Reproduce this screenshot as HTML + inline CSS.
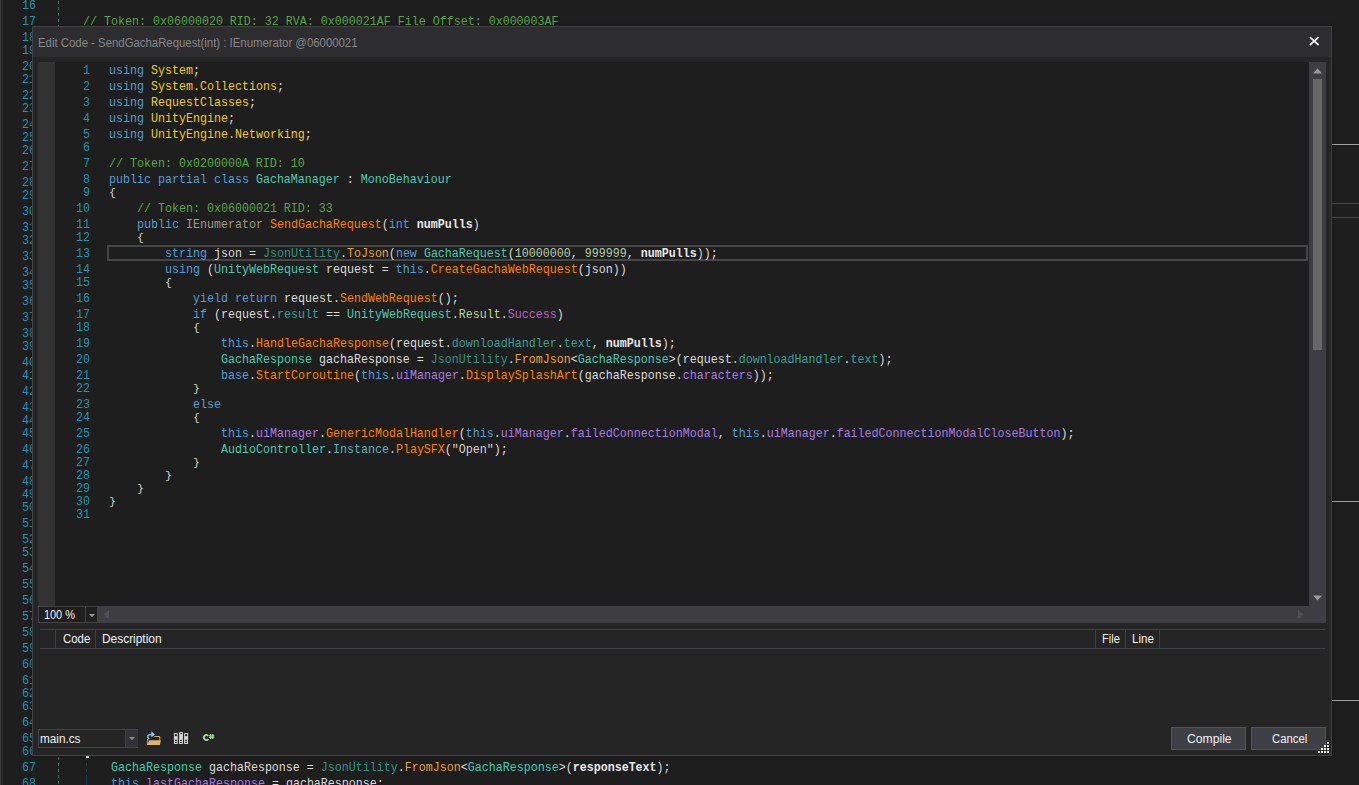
<!DOCTYPE html>
<html><head><meta charset="utf-8"><title>Edit Code</title>
<style>
html,body{margin:0;padding:0}
html{width:1359px;height:785px;overflow:hidden;background:#1e1e1e}
body{width:1359px;height:785px;overflow:hidden;position:relative;background:#1e1e1e;font-family:"Liberation Sans",sans-serif;font-size:12px;color:#f1f1f1}
.abs,.ln,.cl,.bn,.bl{position:absolute}
.ln,.cl,.bn,.bl{font-family:"Liberation Mono",monospace;font-size:12.2px;letter-spacing:0px;line-height:16px;height:16px;white-space:pre;color:#dcdcdc}
.cl,.bl{transform:scaleX(0.95628);transform-origin:0 0}
.ln,.bn{color:#2b91af;text-align:right;transform:scaleX(0.95628);transform-origin:100% 0}
.ln{left:50px;width:40px}
.bn{left:6.2px;width:30px}
.k{color:#569cd6}
.ns{color:#f2c832}
.t{color:#4ec9b0}
.st{color:#3c8f83}
.i{color:#9b9b82}
.m{color:#ff8000}
.sm{color:#e8a04a}
.f{color:#a77be0}
.ef{color:#bd63c5}
.e{color:#b8d7a3}
.p{color:#3f9e98}
.sp{color:#5fb4b4}
.c{color:#57a64a}
.n{color:#b5cea8}
.s{color:#dcd2c8}
.l{color:#dcdcdc}
.b{color:#e8e8e8}
.b{font-weight:bold}
#root{position:absolute;left:0;top:0;width:1359px;height:785px;overflow:hidden;contain:strict}
#dlg{position:absolute;left:32px;top:26px;width:1300px;height:730px;box-sizing:border-box;background:#252526;border:1px solid #434346;box-shadow:0 0 3px rgba(0,0,0,.4)}
#dlg .in{position:absolute;left:-33px;top:-27px;width:1359px;height:785px}
.ui{position:absolute;white-space:pre;line-height:16px;height:16px}
</style></head><body><div id="root">

<div class="abs" style="left:0;top:0;width:1px;height:785px;background:#38383a"></div>
<div class="abs" style="left:1px;top:0;width:2px;height:785px;background:#262627"></div>
<div class="abs" style="left:58px;top:0;width:1px;height:785px;background:repeating-linear-gradient(180deg,#2e7a5e 0,#2e7a5e 3.5px,transparent 3.5px,transparent 6px);background-position:0 1px"></div>
<div class="abs" style="left:86px;top:756px;width:1px;height:19px;background:repeating-linear-gradient(180deg,#1f403a 0,#1f403a 3.5px,transparent 3.5px,transparent 6px);background-position:0 1px"></div>
<div class="abs" style="left:86px;top:775px;width:1px;height:10px;background:#1f3f66"></div>
<div class="abs" style="left:86px;top:756px;width:3px;height:1.5px;background:#e8e8e8"></div>
<div class="bn" style="top:-2.3px">16</div>
<div class="bn" style="top:13.7px">17</div>
<div class="bn" style="top:29.7px">18</div>
<div class="bn" style="top:42.7px">19</div>
<div class="bn" style="top:58.7px">20</div>
<div class="bn" style="top:71.7px">21</div>
<div class="bn" style="top:87.7px">22</div>
<div class="bn" style="top:100.7px">23</div>
<div class="bn" style="top:116.7px">24</div>
<div class="bn" style="top:129.7px">25</div>
<div class="bn" style="top:142.7px">26</div>
<div class="bn" style="top:158.7px">27</div>
<div class="bn" style="top:174.7px">28</div>
<div class="bn" style="top:187.7px">29</div>
<div class="bn" style="top:203.7px">30</div>
<div class="bn" style="top:219.7px">31</div>
<div class="bn" style="top:232.7px">32</div>
<div class="bn" style="top:248.7px">33</div>
<div class="bn" style="top:264.7px">34</div>
<div class="bn" style="top:277.7px">35</div>
<div class="bn" style="top:293.7px">36</div>
<div class="bn" style="top:309.7px">37</div>
<div class="bn" style="top:325.7px">38</div>
<div class="bn" style="top:338.7px">39</div>
<div class="bn" style="top:354.7px">40</div>
<div class="bn" style="top:367.7px">41</div>
<div class="bn" style="top:383.7px">42</div>
<div class="bn" style="top:399.7px">43</div>
<div class="bn" style="top:412.7px">44</div>
<div class="bn" style="top:425.7px">45</div>
<div class="bn" style="top:441.7px">46</div>
<div class="bn" style="top:457.7px">47</div>
<div class="bn" style="top:473.7px">48</div>
<div class="bn" style="top:486.7px">49</div>
<div class="bn" style="top:499.7px">50</div>
<div class="bn" style="top:515.7px">51</div>
<div class="bn" style="top:531.7px">52</div>
<div class="bn" style="top:544.7px">53</div>
<div class="bn" style="top:560.7px">54</div>
<div class="bn" style="top:576.7px">55</div>
<div class="bn" style="top:592.7px">56</div>
<div class="bn" style="top:608.7px">57</div>
<div class="bn" style="top:624.7px">58</div>
<div class="bn" style="top:640.7px">59</div>
<div class="bn" style="top:656.7px">60</div>
<div class="bn" style="top:672.7px">61</div>
<div class="bn" style="top:685.7px">62</div>
<div class="bn" style="top:698.7px">63</div>
<div class="bn" style="top:714.7px">64</div>
<div class="bn" style="top:730.7px">65</div>
<div class="bn" style="top:743.7px">66</div>
<div class="bn" style="top:759.7px">67</div>
<div class="bn" style="top:775.7px">68</div>
<div class="bl" style="left:83px;top:13.7px"><span class="c">// Token: 0x06000020 RID: 32 RVA: 0x000021AF File Offset: 0x000003AF</span></div>
<div class="bl" style="left:111px;top:759.7px"><span class="t">GachaResponse</span> <span class="l">gachaResponse</span> = <span class="st">JsonUtility</span>.<span class="sm">FromJson</span>&lt;<span class="t">GachaResponse</span>&gt;(<span class="b">responseText</span>);</div>
<div class="bl" style="left:111px;top:775.7px"><span class="k">this</span>.<span class="f">lastGachaResponse</span> = <span class="l">gachaResponse</span>;</div>
<div class="abs" style="left:1332px;top:144px;width:27px;height:1px;background:#a0a0a0"></div>
<div class="abs" style="left:1332px;top:203px;width:27px;height:1px;background:#4a4a4c"></div>
<div class="abs" style="left:1332px;top:217px;width:27px;height:1px;background:#4a4a4c"></div>
<div class="abs" style="left:1332px;top:501px;width:27px;height:1px;background:#a0a0a0"></div>
<div class="abs" style="left:1332px;top:700px;width:27px;height:1px;background:#a0a0a0"></div>
<div id="dlg"><div class="in">
<div class="abs" style="left:33px;top:27px;width:1298px;height:30px;background:#2d2d30"></div>
<div class="ui" id="title" style="left:38.4px;top:35px;font-size:12.3px;color:#878787;transform:scaleX(0.9251);transform-origin:0 50%;">Edit Code - SendGachaRequest(int) : IEnumerator @06000021</div>
<svg class="abs" style="left:1308px;top:35px" width="12" height="12" viewBox="0 0 12 12"><path d="M1.9 2.1 L10.6 10 M10.6 2.1 L1.9 10" stroke="#f1f1f1" stroke-width="1.7" fill="none"/></svg>
<div class="abs" style="left:38px;top:62px;width:1271px;height:544px;background:#1e1e1e"></div>
<div class="abs" style="left:38px;top:62px;width:17px;height:544px;background:#333333"></div>
<div class="abs" style="left:107px;top:245px;width:1201px;height:16px;box-sizing:border-box;border:2px solid #464646"></div>
<div class="ln" style="top:62.7px">1</div>
<div class="cl" style="left:109px;top:62.7px"><span class="k">using</span> <span class="ns">System</span>;</div>
<div class="ln" style="top:78.7px">2</div>
<div class="cl" style="left:109px;top:78.7px"><span class="k">using</span> <span class="ns">System.Collections</span>;</div>
<div class="ln" style="top:94.7px">3</div>
<div class="cl" style="left:109px;top:94.7px"><span class="k">using</span> <span class="ns">RequestClasses</span>;</div>
<div class="ln" style="top:110.7px">4</div>
<div class="cl" style="left:109px;top:110.7px"><span class="k">using</span> <span class="ns">UnityEngine</span>;</div>
<div class="ln" style="top:126.7px">5</div>
<div class="cl" style="left:109px;top:126.7px"><span class="k">using</span> <span class="ns">UnityEngine.Networking</span>;</div>
<div class="ln" style="top:139.7px">6</div>
<div class="ln" style="top:155.7px">7</div>
<div class="cl" style="left:109px;top:155.7px"><span class="c">// Token: 0x0200000A RID: 10</span></div>
<div class="ln" style="top:171.7px">8</div>
<div class="cl" style="left:109px;top:171.7px"><span class="k">public partial class</span> <span class="t">GachaManager</span> : <span class="t">MonoBehaviour</span></div>
<div class="ln" style="top:184.7px">9</div>
<div class="cl" style="left:109px;top:184.7px;transform:scale(0.95628,0.82);transform-origin:0 11.3px;color:#d0d0d0">{</div>
<div class="ln" style="top:200.7px">10</div>
<div class="cl" style="left:137px;top:200.7px"><span class="c">// Token: 0x06000021 RID: 33</span></div>
<div class="ln" style="top:216.7px">11</div>
<div class="cl" style="left:137px;top:216.7px"><span class="k">public</span> <span class="i">IEnumerator</span> <span class="m">SendGachaRequest</span>(<span class="k">int</span> <span class="b">numPulls</span>)</div>
<div class="ln" style="top:229.7px">12</div>
<div class="cl" style="left:137px;top:229.7px;transform:scale(0.95628,0.82);transform-origin:0 11.3px;color:#d0d0d0">{</div>
<div class="ln" style="top:245.7px">13</div>
<div class="cl" style="left:165px;top:245.7px"><span class="k">string</span> <span class="l">json</span> = <span class="st">JsonUtility</span>.<span class="sm">ToJson</span>(<span class="k">new</span> <span class="t">GachaRequest</span>(<span class="n">10000000</span>, <span class="n">999999</span>, <span class="b">numPulls</span>));</div>
<div class="ln" style="top:261.7px">14</div>
<div class="cl" style="left:165px;top:261.7px"><span class="k">using</span> (<span class="t">UnityWebRequest</span> <span class="l">request</span> = <span class="k">this</span>.<span class="m">CreateGachaWebRequest</span>(<span class="l">json</span>))</div>
<div class="ln" style="top:274.7px">15</div>
<div class="cl" style="left:165px;top:274.7px;transform:scale(0.95628,0.82);transform-origin:0 11.3px;color:#d0d0d0">{</div>
<div class="ln" style="top:290.7px">16</div>
<div class="cl" style="left:193px;top:290.7px"><span class="k">yield return</span> <span class="l">request</span>.<span class="m">SendWebRequest</span>();</div>
<div class="ln" style="top:306.7px">17</div>
<div class="cl" style="left:193px;top:306.7px"><span class="k">if</span> (<span class="l">request</span>.<span class="p">result</span> == <span class="t">UnityWebRequest</span>.<span class="e">Result</span>.<span class="ef">Success</span>)</div>
<div class="ln" style="top:319.7px">18</div>
<div class="cl" style="left:193px;top:319.7px;transform:scale(0.95628,0.82);transform-origin:0 11.3px;color:#d0d0d0">{</div>
<div class="ln" style="top:335.7px">19</div>
<div class="cl" style="left:221px;top:335.7px"><span class="k">this</span>.<span class="m">HandleGachaResponse</span>(<span class="l">request</span>.<span class="p">downloadHandler</span>.<span class="p">text</span>, <span class="b">numPulls</span>);</div>
<div class="ln" style="top:351.7px">20</div>
<div class="cl" style="left:221px;top:351.7px"><span class="t">GachaResponse</span> <span class="l">gachaResponse</span> = <span class="st">JsonUtility</span>.<span class="sm">FromJson</span>&lt;<span class="t">GachaResponse</span>&gt;(<span class="l">request</span>.<span class="p">downloadHandler</span>.<span class="p">text</span>);</div>
<div class="ln" style="top:367.7px">21</div>
<div class="cl" style="left:221px;top:367.7px"><span class="k">base</span>.<span class="m">StartCoroutine</span>(<span class="k">this</span>.<span class="f">uiManager</span>.<span class="m">DisplaySplashArt</span>(<span class="l">gachaResponse</span>.<span class="f">characters</span>));</div>
<div class="ln" style="top:380.7px">22</div>
<div class="cl" style="left:193px;top:380.7px;transform:scale(0.95628,0.82);transform-origin:0 11.3px;color:#d0d0d0">}</div>
<div class="ln" style="top:396.7px">23</div>
<div class="cl" style="left:193px;top:396.7px"><span class="k">else</span></div>
<div class="ln" style="top:409.7px">24</div>
<div class="cl" style="left:193px;top:409.7px;transform:scale(0.95628,0.82);transform-origin:0 11.3px;color:#d0d0d0">{</div>
<div class="ln" style="top:425.7px">25</div>
<div class="cl" style="left:221px;top:425.7px"><span class="k">this</span>.<span class="f">uiManager</span>.<span class="m">GenericModalHandler</span>(<span class="k">this</span>.<span class="f">uiManager</span>.<span class="f">failedConnectionModal</span>, <span class="k">this</span>.<span class="f">uiManager</span>.<span class="f">failedConnectionModalCloseButton</span>);</div>
<div class="ln" style="top:441.7px">26</div>
<div class="cl" style="left:221px;top:441.7px"><span class="t">AudioController</span>.<span class="sp">Instance</span>.<span class="m">PlaySFX</span>(<span class="s">&quot;Open&quot;</span>);</div>
<div class="ln" style="top:454.7px">27</div>
<div class="cl" style="left:193px;top:454.7px;transform:scale(0.95628,0.82);transform-origin:0 11.3px;color:#d0d0d0">}</div>
<div class="ln" style="top:467.7px">28</div>
<div class="cl" style="left:165px;top:467.7px;transform:scale(0.95628,0.82);transform-origin:0 11.3px;color:#d0d0d0">}</div>
<div class="ln" style="top:480.7px">29</div>
<div class="cl" style="left:137px;top:480.7px;transform:scale(0.95628,0.82);transform-origin:0 11.3px;color:#d0d0d0">}</div>
<div class="ln" style="top:493.7px">30</div>
<div class="cl" style="left:109px;top:493.7px;transform:scale(0.95628,0.82);transform-origin:0 11.3px;color:#d0d0d0">}</div>
<div class="ln" style="top:506.7px">31</div>
<div class="abs" style="left:1309px;top:62px;width:17px;height:544px;background:#3e3e42"></div>
<div class="abs" style="left:1312.5px;top:79px;width:9.6px;height:271px;background:#686868"></div>
<svg class="abs" style="left:1313px;top:67.5px" width="9" height="6" viewBox="0 0 9 6"><path d="M0 5.5 L4.5 0.5 L9 5.5 Z" fill="#999999"/></svg>
<svg class="abs" style="left:1313px;top:594.5px" width="9" height="6" viewBox="0 0 9 6"><path d="M0 0.5 L4.5 5.5 L9 0.5 Z" fill="#999999"/></svg>
<div class="abs" style="left:38px;top:606px;width:1288px;height:17px;background:#3e3e42"></div>
<div class="abs" style="left:38px;top:606px;width:60px;height:17px;box-sizing:border-box;background:#1f1f20;border:1px solid #434346"></div>
<div class="abs" style="left:85px;top:607px;width:1px;height:15px;background:#434346"></div>
<svg class="abs" style="left:88.8px;top:613.6px" width="6" height="3.4" viewBox="0 0 6 3.4"><path d="M0 0 L6 0 L3 3.4 Z" fill="#999999"/></svg>
<div class="ui" id="zoom" style="left:43.5px;top:607px;font-size:12.3px;transform:scaleX(0.8859);transform-origin:0 50%;">100 %</div>
<svg class="abs" style="left:103px;top:610px" width="6" height="9" viewBox="0 0 6 9"><path d="M6 0 L6 9 L0.5 4.5 Z" fill="#505054"/></svg>
<svg class="abs" style="left:1298px;top:610px" width="6" height="9" viewBox="0 0 6 9"><path d="M0 0 L0 9 L5.5 4.5 Z" fill="#505054"/></svg>
<div class="abs" style="left:40px;top:629px;width:1285px;height:1px;background:#3f3f46"></div>
<div class="abs" style="left:40px;top:648px;width:1285px;height:1px;background:#3f3f46"></div>
<div class="abs" style="left:55px;top:630px;width:1px;height:18px;background:#3f3f46"></div>
<div class="abs" style="left:95px;top:630px;width:1px;height:18px;background:#3f3f46"></div>
<div class="abs" style="left:1095px;top:630px;width:1px;height:18px;background:#3f3f46"></div>
<div class="abs" style="left:1125px;top:630px;width:1px;height:18px;background:#3f3f46"></div>
<div class="abs" style="left:1159px;top:630px;width:1px;height:18px;background:#3f3f46"></div>
<div class="ui" id="hcode" style="left:62.7px;top:631px;font-size:12.3px;transform:scaleX(0.9283);transform-origin:0 50%;">Code</div>
<div class="ui" id="hdesc" style="left:102.1px;top:631px;font-size:12.3px;transform:scaleX(0.9686);transform-origin:0 50%;">Description</div>
<div class="ui" id="hfile" style="left:1102.4px;top:631px;font-size:12.3px;transform:scaleX(0.9030);transform-origin:0 50%;">File</div>
<div class="ui" id="hline" style="left:1132.4px;top:631px;font-size:12.3px;transform:scaleX(0.9373);transform-origin:0 50%;">Line</div>
<div class="abs" style="left:38px;top:729px;width:100px;height:19px;box-sizing:border-box;background:#252526;border:1px solid #434346"></div>
<div class="abs" style="left:125px;top:730px;width:12px;height:17px;background:#333337;border-left:1px solid #434346"></div>
<svg class="abs" style="left:128.8px;top:736.8px" width="6" height="3.4" viewBox="0 0 6 3.4"><path d="M0 0 L6 0 L3 3.4 Z" fill="#8a8a8a"/></svg>
<div class="ui" id="maincs" style="left:40.3px;top:731px;font-size:12.3px;transform:scaleX(0.9558);transform-origin:0 50%;">main.cs</div>
<svg class="abs" style="left:146px;top:730px" width="16" height="16" viewBox="0 0 16 16">
<path d="M1.7 8.8 L1.7 14.6 M8.3 6.5 L13.8 6.5 L13.8 10.4" fill="none" stroke="#dcb067" stroke-width="1"/>
<path d="M3.5 10.3 L14.9 10.3 L13.9 15.1 L1.2 15.1 L1.2 14.4 Z" fill="#e3b466"/>
<path d="M5.8 4.5 C3.4 4.2 1.6 5.1 1.7 6.9 C1.8 7.9 2.4 8.5 3.3 8.9" fill="none" stroke="#75beff" stroke-width="1.5"/>
<path d="M5.3 1.3 L8.8 4.5 L5.3 7.6 Z" fill="#8ccaff"/>
</svg>
<svg class="abs" style="left:173px;top:731px" width="16" height="14" viewBox="0 0 16 14" shape-rendering="auto">
<rect x="0.9" y="2.1" width="3.9" height="10.8" rx="0.4" fill="#d2d2d2"/>
<rect x="6.1" y="1" width="3.9" height="11.9" rx="0.4" fill="#d2d2d2"/>
<rect x="11.1" y="2.1" width="4" height="10.8" rx="0.4" fill="#d2d2d2"/>
<rect x="1.9" y="3.2" width="2" height="1.9" fill="#161616"/><rect x="1.9" y="8.9" width="2" height="1.1" fill="#2a2a2a"/><rect x="1.9" y="10.9" width="2" height="1" fill="#2a2a2a"/>
<rect x="7.05" y="2.1" width="2" height="0.9" fill="#2a2a2a"/><rect x="7.05" y="8.9" width="2" height="1.1" fill="#2a2a2a"/><rect x="7.05" y="10.9" width="2" height="1" fill="#2a2a2a"/>
<rect x="12.1" y="3.2" width="2" height="1.9" fill="#161616"/><rect x="12.1" y="8.9" width="2" height="1.1" fill="#2a2a2a"/><rect x="12.1" y="10.9" width="2" height="1" fill="#2a2a2a"/>
</svg>
<svg class="abs" id="csharp" style="left:202px;top:733px" width="14" height="10" viewBox="0 0 14 10">
<path d="M6.2 2.9 A2.35 2.55 0 1 0 6.2 6.1" fill="none" stroke="#98d48c" stroke-width="2.1"/>
<path d="M8.7 1.0 L8.5 6.0 M10.8 1.0 L10.6 6.0 M7.1 2.7 L12.3 2.7 M7.0 4.4 L12.2 4.4" fill="none" stroke="#a4dc9a" stroke-width="1.15"/>
</svg>
<div class="abs" style="left:1171px;top:727px;width:75px;height:23px;box-sizing:border-box;background:#3f3f46;border:1px solid #555555"></div>
<div class="abs" style="left:1251px;top:727px;width:75px;height:23px;box-sizing:border-box;background:#3f3f46;border:1px solid #555555"></div>
<div class="ui" id="bcomp" style="left:1186.7px;top:731px;font-size:12.3px;transform:scaleX(0.9885);transform-origin:0 50%;">Compile</div>
<div class="ui" id="bcanc" style="left:1271.6px;top:731px;font-size:12.3px;transform:scaleX(0.9218);transform-origin:0 50%;">Cancel</div>
<svg class="abs" style="left:1318px;top:742px" width="12" height="12" viewBox="0 0 12 12"><rect x="9" y="0" width="2" height="2" fill="#f1f1f1"/><rect x="9" y="3" width="2" height="2" fill="#f1f1f1"/><rect x="6" y="3" width="2" height="2" fill="#f1f1f1"/><rect x="9" y="6" width="2" height="2" fill="#f1f1f1"/><rect x="6" y="6" width="2" height="2" fill="#f1f1f1"/><rect x="3" y="6" width="2" height="2" fill="#f1f1f1"/><rect x="9" y="9" width="2" height="2" fill="#f1f1f1"/><rect x="6" y="9" width="2" height="2" fill="#f1f1f1"/><rect x="3" y="9" width="2" height="2" fill="#f1f1f1"/><rect x="0" y="9" width="2" height="2" fill="#f1f1f1"/></svg>
</div></div>
</div></body></html>
